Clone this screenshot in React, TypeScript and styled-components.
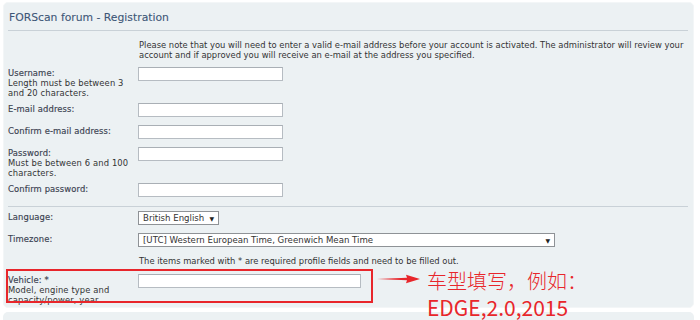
import React from 'react'
import styled, { createGlobalStyle } from 'styled-components'

const GlobalStyle = createGlobalStyle`
    html, body {
        margin: 0;
        padding: 0;
        background: #ffffff;
    }
    body {
        width: 700px;
        height: 320px;
        overflow: hidden;
        font-family: 'DejaVu Sans', Verdana, sans-serif;
    }
`

type Field = {
    label: string
    desc?: string[]
    width: number
}

const accountFields: Field[] = [
    { label: 'Username:', desc: ['Length must be between 3', 'and 20 characters.'], width: 145 },
    { label: 'E-mail address:', width: 145 },
    { label: 'Confirm e-mail address:', width: 145 },
    { label: 'Password:', desc: ['Must be between 6 and 100', 'characters.'], width: 145 },
    { label: 'Confirm password:', width: 145 },
]

function App() {
    return (
        <Page>
            <GlobalStyle />
            <Panel>
                <Title>FORScan forum - Registration</Title>
                <Fieldset>
                    <Note>
                        Please note that you will need to enter a valid e-mail address before your account is
                        activated. The administrator will review your account and if approved you will receive an
                        e-mail at the address you specified.
                    </Note>
                    {accountFields.map((f) => (
                        <Row key={f.label}>
                            <Term>
                                <Label>{f.label}</Label>
                                {f.desc && f.desc.map((d) => <Desc key={d}>{d}</Desc>)}
                            </Term>
                            <Input $width={f.width} />
                        </Row>
                    ))}
                </Fieldset>
                <Fieldset $gap={4}>
                    <Row>
                        <Term>
                            <Label>Language:</Label>
                        </Term>
                        <Select $width={81}>
                            <span>British English</span>
                            <Caret>▼</Caret>
                        </Select>
                    </Row>
                    <Row>
                        <Term>
                            <Label>Timezone:</Label>
                        </Term>
                        <Select $width={417}>
                            <span>[UTC] Western European Time, Greenwich Mean Time</span>
                            <Caret>▼</Caret>
                        </Select>
                    </Row>
                    <Note $tight>The items marked with * are required profile fields and need to be filled out.</Note>
                    <Highlight>
                        <Row>
                            <Term>
                                <Label>Vehicle: *</Label>
                                <Desc>Model, engine type and</Desc>
                                <Desc>capacity/power, year</Desc>
                            </Term>
                            <Input $width={223} />
                        </Row>
                        <Callout>
                            <svg width="44" height="10" viewBox="0 0 44 10">
                                <path d="M0 5 L30 3.8 L29 0.8 L43 5 L29 9.2 L30 6.2 Z" fill="#e8262b" />
                            </svg>
                            <CalloutText>
                                <CnLine>车型填写，例如：</CnLine>
                                <Example>EDGE,2.0,2015</Example>
                            </CalloutText>
                        </Callout>
                    </Highlight>
                </Fieldset>
            </Panel>
            <NextPanel />
        </Page>
    )
}

export default App

const Page = styled.div`
    padding: 2px 6px 0 3px;
    display: flex;
    flex-direction: column;
    gap: 4px;
`

const Panel = styled.div`
    background: #ecf1f3;
    border: 1px solid #f3f6f7;
    border-radius: 5px;
    height: 306px;
    padding: 8px 5px 0 4px;
    box-sizing: border-box;
    color: #333333;
`

const NextPanel = styled.div`
    background: #ecf1f3;
    border-radius: 5px 5px 0 0;
    height: 12px;
`

const Title = styled.h2`
    margin: 0;
    padding: 0 0 5px 1px;
    font-family: 'DejaVu Sans', Verdana, sans-serif;
    font-weight: normal;
    font-size: 10.8px;
    line-height: 14px;
    color: #3d5677;
    -webkit-text-stroke: 0.1px #3d5677;
    border-bottom: 1px solid #c9d1d7;
`

const Fieldset = styled.div<{ $gap?: number }>`
    display: flex;
    flex-direction: column;
    gap: 5px;
    padding-top: ${(p) => p.$gap ?? 9}px;
    border-bottom: 1px solid #c9d1d7;
    padding-bottom: 6px;
    &:last-child {
        border-bottom: 0;
    }
`

const Note = styled.p<{ $tight?: boolean }>`
    margin: ${(p) => (p.$tight ? '1px -4px 3px 0' : '0 -4px 2px 0')};
    padding-left: 131px;
    font-size: 8.4px;
    line-height: 10px;
    color: #333333;
`

const Row = styled.div`
    display: grid;
    grid-template-columns: 130px 1fr;
    align-items: start;
`

const Term = styled.div`
    display: flex;
    flex-direction: column;
`

const Label = styled.span`
    font-size: 8.4px;
    letter-spacing: 0.12px;
    line-height: 10px;
    color: #3a4150;
    padding-top: 1px;
    -webkit-text-stroke: 0.15px #3a4150;
`

const Desc = styled.span`
    font-size: 8.4px;
    letter-spacing: 0.12px;
    line-height: 10px;
    color: #333333;
`

const Input = styled.div<{ $width: number }>`
    width: ${(p) => p.$width}px;
    height: 14px;
    margin-bottom: 3px;
    box-sizing: border-box;
    background: #ffffff;
    border: 1px solid #b6bcc2;
    border-top-color: #a9afb5;
`

const Select = styled.div<{ $width: number }>`
    width: ${(p) => p.$width}px;
    height: 14px;
    margin-bottom: 3px;
    box-sizing: border-box;
    background: #ffffff;
    border: 1px solid #8e9296;
    display: flex;
    align-items: center;
    justify-content: space-between;
    padding: 0 4px 0 4px;
    font-size: 8.6px;
    color: #333333;
`

const Caret = styled.span`
    font-size: 6px;
    color: #222222;
`

const Highlight = styled.div`
    position: relative;
    &::after {
        content: '';
        position: absolute;
        left: -2px;
        top: -5px;
        width: 367px;
        height: 34px;
        box-sizing: border-box;
        border: 2px solid #e8262b;
        pointer-events: none;
    }
`

const Callout = styled.div`
    position: absolute;
    left: 369px;
    top: -7px;
    display: flex;
    align-items: flex-start;
    gap: 6px;
    svg {
        margin-top: 7px;
    }
`

const CalloutText = styled.div`
    display: flex;
    flex-direction: column;
    color: #e8262b;
`

const CnLine = styled.span`
    font-family: 'Noto Sans CJK SC', sans-serif;
    font-weight: 300;
    font-size: 20px;
    line-height: 27px;
    white-space: nowrap;
`

const Example = styled.span`
    font-family: 'Noto Sans CJK SC', sans-serif;
    font-size: 21px;
    line-height: 22px;
    margin-top: 2px;
    white-space: nowrap;
`
